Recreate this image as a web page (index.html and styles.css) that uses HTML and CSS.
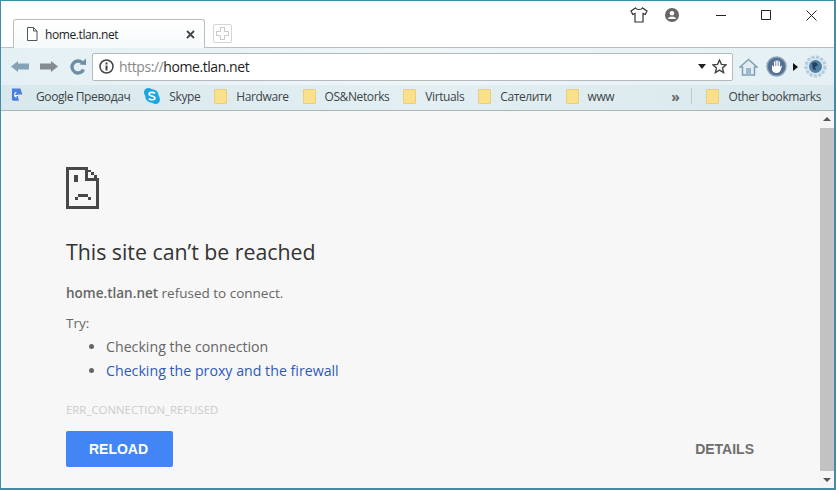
FILE: index.html
```html
<!DOCTYPE html>
<html lang="en">
<head>
    <meta charset="UTF-8">
    <title>home.tlan.net</title>
    <link rel="stylesheet" href="styles.css">
</head>
<body>
<div class="window">

    <div class="tabstrip">
        <div class="tab">
            <svg class="tab-icon" width="12" height="14" viewBox="0 0 12 14"><path d="M1.5.5h6l3.5 3.5v9.500H1.500z M7.500.5v3.500h3.500" fill="#fff" stroke="#555"/></svg>
            <span class="tab-title">home.tlan.net</span>
            <svg class="tab-close" width="9" height="9" viewBox="0 0 9 9"><path d="M1 1l7 7M8 1l-7 7" stroke="#444" stroke-width="1.800"/></svg>
        </div>
        <div class="newtab">
            <svg width="15" height="15" viewBox="0 0 15 15"><path d="M5.500 1.500h4v4h4v4h-4v4h-4v-4h-4v-4h4z" fill="#fff" stroke="#c8c8c8"/></svg>
        </div>
        <div class="wincontrols">
            <svg class="theme-icon" width="18" height="16" viewBox="0 0 18 16"><path d="M5.500 1L1 4l1.800 3.500 2.200-1V15h8V6.500l2.200 1L17 4l-4.500-3c-1 2-6 2-7 0z" fill="#fff" stroke="#333" stroke-width="1.200"/></svg>
            <svg class="avatar-icon" width="14" height="14" viewBox="0 0 14 14"><circle cx="7" cy="7" r="7" fill="#666"/><circle cx="7" cy="5.200" r="2.300" fill="#fff"/><path d="M2.800 11c.8-2 2.400-2.600 4.200-2.600s3.400.6 4.200 2.600z" fill="#fff"/></svg>
            <div class="winbtn"><svg width="10" height="10" viewBox="0 0 10 10"><path d="M0 5.500h10" stroke="#222"/></svg></div>
            <div class="winbtn"><svg width="10" height="10" viewBox="0 0 10 10"><path d="M.5.500h9v9h-9z" fill="none" stroke="#222"/></svg></div>
            <div class="winbtn winbtn-close"><svg width="11" height="11" viewBox="0 0 11 11"><path d="M.5.500l10 10M10.500.500l-10 10" stroke="#222"/></svg></div>
        </div>
    </div>

    <div class="toolbar">
        <svg class="nav-icon" width="18" height="11" viewBox="0 0 18 11"><path d="M0 5.500L7 0v2.500h11v6H7V11z" fill="#86a3b5"/></svg>
        <svg class="nav-icon" width="18" height="11" viewBox="0 0 18 11"><path d="M18 5.500L11 0v2.500H0v6h11V11z" fill="#858c91"/></svg>
        <svg class="nav-icon reload-icon" width="18" height="17" viewBox="0 0 18 17"><path d="M14.500 11.500A6 6 0 1 1 13 4.500" fill="none" stroke="#6d8fa5" stroke-width="3.400"/><path d="M10.500 6.500L17 7V.5z" fill="#6d8fa5"/></svg>
        <div class="omnibox">
            <svg class="info-icon" width="15" height="15" viewBox="0 0 15 15"><circle cx="7.500" cy="7.500" r="6.500" fill="none" stroke="#444" stroke-width="1.500"/><path d="M6.500 3.500h2v2h-2zM6.500 6.500h2v5h-2z" fill="#444"/></svg>
            <span class="url"><span class="url-scheme">https://</span>home.tlan.net</span>
            <span class="url-caret"></span>
            <svg class="star-icon" width="15" height="15" viewBox="0 0 15 15"><path d="M7.500 1l1.900 4.400 4.700.4-3.600 3.100 1.100 4.700-4.100-2.500-4.100 2.500 1.100-4.700L.9 5.800l4.700-.4z" fill="none" stroke="#444" stroke-width="1.400"/></svg>
        </div>
        <svg class="ext-home" width="19" height="18" viewBox="0 0 19 18"><path d="M9.500 1.500L1 9h2.500v8h12V9H18z" fill="#e3eef4" stroke="#7f9fb5" stroke-width="1.500"/><path d="M7 10h5v7H7z" fill="#9db8c9"/></svg>
        <svg class="ext-hand" width="21" height="21" viewBox="0 0 21 21"><circle cx="10.500" cy="10.500" r="9.500" fill="#52708f" stroke="#8aa2b8" stroke-width="1.500"/><path d="M6 9v4c0 2.500 2 4 4.500 4s4-1.500 4.500-4l1-3-1-.5-1 2V5.500h-1V10h-.5V4.500h-1.200V10h-.5V4.500h-1.200V10H9V5.500H8V11z" fill="#fff"/></svg>
        <span class="ext-caret"></span>
        <svg class="ext-globe" width="23" height="23" viewBox="0 0 23 23"><circle cx="11.500" cy="11.500" r="9.500" fill="#dbe8ef" stroke="#b4cbdb" stroke-width="3" stroke-dasharray="3 1.500"/><circle cx="11.500" cy="11.500" r="6.500" fill="#4f7ea6"/><path d="M8 8l4-1 2 3-3 2 1 3-3-1z" fill="#23405c"/></svg>
    </div>

    <div class="bookmarks">
        <div class="bookmark">
            <svg width="16" height="19" viewBox="0 0 17 20"><path d="M1 1.500h9l4 13H2.500a1.500 1.500 0 0 1-1.500-1.500z" fill="#4a7fe0"/><path d="M7 8h9v10H9z" fill="#dfe6ea"/><path d="M4 9h3.500M5.800 5.500c-2.500 0-2.500 5 .2 5" fill="none" stroke="#fff" stroke-width="1.200"/></svg>
            <span>Google Преводач</span>
        </div>
        <div class="bookmark">
            <svg width="16" height="16" viewBox="0 0 16 16"><circle cx="4.500" cy="4.500" r="4.500" fill="#1ba5e4"/><circle cx="11.500" cy="11.500" r="4.500" fill="#1ba5e4"/><circle cx="8" cy="8" r="6.800" fill="#1ba5e4"/><path d="M11 5.500C10 4 5 3.800 5 6c0 2.300 6 1.500 6 4 0 2.200-5 2.200-6.200.5" fill="none" stroke="#fff" stroke-width="1.600"/></svg>
            <span>Skype</span>
        </div>
        <div class="bookmark"><span class="folder"></span><span>Hardware</span></div>
        <div class="bookmark"><span class="folder"></span><span>OS&amp;Netorks</span></div>
        <div class="bookmark"><span class="folder"></span><span>Virtuals</span></div>
        <div class="bookmark"><span class="folder"></span><span>Сателити</span></div>
        <div class="bookmark"><span class="folder"></span><span>www</span></div>
        <span class="chevrons">»</span>
        <span class="bookmark-sep"></span>
        <div class="bookmark"><span class="folder"></span><span>Other bookmarks</span></div>
    </div>

    <div class="content">
        <div class="page">
            <svg class="sad-icon" width="33" height="42" viewBox="0 0 33 42" shape-rendering="crispEdges"><path d="M0 0h22v3H3v36h27V14h3v28H0z M22 3h3v2h-3z M25 5h3v3h-3z M28 8h3v3h-3z M19 3h3v8h11v3H19z" fill="#484848"/><path d="M8 8h4v7H8z M12 27h10v3H12z M9 30h3v3H9z M22 30h3v3h-3z" fill="#484848"/></svg>
            <h1>This site can’t be reached</h1>
            <p class="summary"><strong>home.tlan.net</strong> refused to connect.</p>
            <p class="try">Try:</p>
            <ul>
                <li>Checking the connection</li>
                <li><a href="#">Checking the proxy and the firewall</a></li>
            </ul>
            <div class="errcode">ERR_CONNECTION_REFUSED</div>
            <div class="buttons">
                <button class="reload">RELOAD</button>
                <button class="details">DETAILS</button>
            </div>
        </div>
        <div class="scrollbar">
            <span class="arrow-up"></span>
            <div class="thumb"></div>
            <span class="arrow-down"></span>
        </div>
    </div>

</div>
</body>
</html>
```
FILE: styles.css
```css
html, body {
    margin: 0;
    padding: 0;
}

body {
    font-family: 'Open Sans', 'Noto Sans', sans-serif;
    color: #333;
    overflow: hidden;
}

.window {
    width: 836px;
    height: 490px;
    box-sizing: border-box;
    border: 1px solid #3f8cab;
    border-width: 1px 2px 2px 1px;
    display: flex;
    flex-direction: column;
    background: #fff;
}

/* tabs + window buttons */
.tabstrip {
    height: 47px;
    flex: none;
    display: flex;
    align-items: flex-end;
    padding-left: 12px;
    background: #fff;
    border-bottom: 1px solid #b9bec0;
    box-sizing: border-box;
}

.tab {
    width: 192px;
    height: 29px;
    box-sizing: border-box;
    margin-bottom: -1px;
    border: 1px solid #bdbdbd;
    border-bottom: none;
    border-radius: 3px 3px 0 0;
    background: linear-gradient(#fff, #f6fafb);
    display: flex;
    align-items: center;
    padding: 0 9px 0 12px;
}

.tab-title {
    margin-left: 7px;
    font-size: 12px;
    letter-spacing: -0.4px;
    color: #222;
    flex: 1;
}

.newtab {
    width: 19px;
    height: 19px;
    box-sizing: border-box;
    margin: 0 0 4px 8px;
    border: 1px solid #d4d4d4;
    border-radius: 2px;
    display: flex;
    align-items: center;
    justify-content: center;
}

.wincontrols {
    align-self: flex-start;
    margin-left: auto;
    height: 28px;
    display: flex;
    align-items: center;
}

.avatar-icon {
    margin-left: 17px;
}

.winbtn {
    width: 45px;
    display: flex;
    justify-content: center;
}

.winbtn-close {
    width: 46px;
}

.avatar-icon + .winbtn {
    margin-left: 19px;
}

/* back / forward / url */
.toolbar {
    height: 37px;
    flex: none;
    display: flex;
    align-items: center;
    padding-left: 10px;
    box-sizing: border-box;
    background: linear-gradient(90deg, #e4f0f4, #eef6f8 50%, #e4f0f4);
}

.nav-icon {
    margin-right: 11px;
}

.reload-icon {
    margin-right: 5px;
}

.omnibox {
    width: 641px;
    height: 28px;
    box-sizing: border-box;
    border: 1px solid #b4b9bb;
    border-radius: 2px;
    background: #fff;
    display: flex;
    align-items: center;
    padding: 0 5px 0 6px;
}

.url {
    margin-left: 5px;
    font-size: 14px;
    letter-spacing: -0.43px;
    color: #222;
    flex: 1;
}

.url-scheme {
    color: #888;
}

.url-caret {
    width: 0;
    height: 0;
    border: 4px solid transparent;
    border-top: 5px solid #222;
    border-bottom: none;
    margin-right: 6px;
}

.ext-home {
    margin-left: 6px;
}

.ext-hand {
    margin-left: 8px;
}

.ext-caret {
    width: 0;
    height: 0;
    border: 4px solid transparent;
    border-left: 5px solid #111;
    border-right: none;
    margin-left: 6px;
}

.ext-globe {
    margin-left: 6px;
}

/* bookmarks bar */
.bookmarks {
    height: 26px;
    flex: none;
    box-sizing: border-box;
    display: flex;
    align-items: center;
    padding: 0 0 3px 10px;
    gap: 14px;
    font-size: 12px;
    letter-spacing: -0.4px;
    color: #3d4446;
    background: linear-gradient(90deg, #d8e8ec, #e3eff2 50%, #d8e8ec);
    border-bottom: 1px solid #a9b6ba;
}

.bookmark {
    display: flex;
    align-items: center;
    gap: 9px;
    white-space: nowrap;
}

.folder {
    width: 13px;
    height: 15px;
    box-sizing: border-box;
    display: block;
    background: #fbe08c;
    border: 1px solid #e8cf7c;
    border-radius: 1px;
}

.chevrons {
    margin-left: auto;
    margin-right: -2px;
    font-size: 14px;
    font-weight: 700;
    color: #666;
}

.bookmark-sep {
    width: 1px;
    height: 16px;
    background: #bcc9cc;
}

.bookmarks .bookmark:last-child {
    margin-right: 13px;
}

/* error page */
.content {
    flex: 1;
    min-height: 0;
    display: flex;
    background: #f7f7f7;
}

.page {
    flex: 1;
    padding: 56px 66px 0 65px;
    font-size: 13.5px;
    color: #666;
}

.sad-icon {
    display: block;
}

h1 {
    margin: 28px 0 0;
    font-size: 21.300px;
    font-weight: 400;
    line-height: 30px;
    color: #333;
}

.summary {
    margin: 17px 0 0;
    line-height: 18px;
}

.summary strong {
    font-weight: 600;
}

.try {
    margin: 12px 0 0;
    line-height: 18px;
}

ul {
    margin: 3px 0 0;
    padding-left: 40px;
    font-size: 14.200px;
    line-height: 24px;
}

a {
    color: #2f5bb7;
    text-decoration: none;
}

.errcode {
    margin-top: 20px;
    font-size: 11.400px;
    line-height: 14px;
    color: #ccc;
}

.buttons {
    margin-top: 14px;
    display: flex;
    justify-content: space-between;
    align-items: center;
}

button {
    font-family: 'Liberation Sans', sans-serif;
    font-weight: 700;
    font-size: 14px;
    border: none;
    cursor: pointer;
}

.reload {
    width: 107px;
    height: 36px;
    padding: 0 8px 0 6px;
    background: #4285f4;
    color: #fff;
    border-radius: 2px;
}

.details {
    padding: 0;
    background: none;
    color: #6e6e6e;
}

.scrollbar {
    width: 14px;
    flex: none;
    display: flex;
    flex-direction: column;
    align-items: center;
    background: #f5f5f5;
}

.arrow-up, .arrow-down {
    width: 0;
    height: 0;
    flex: none;
    border: 4px solid transparent;
}

.arrow-up {
    border-bottom: 4px solid #555;
    border-top: none;
    margin: 6px 0 7px;
}

.arrow-down {
    border-top: 4px solid #555;
    border-bottom: none;
    margin: 7px 0 6px;
}

.thumb {
    width: 100%;
    flex: 1;
    background: #c2c2c2;
}
```
